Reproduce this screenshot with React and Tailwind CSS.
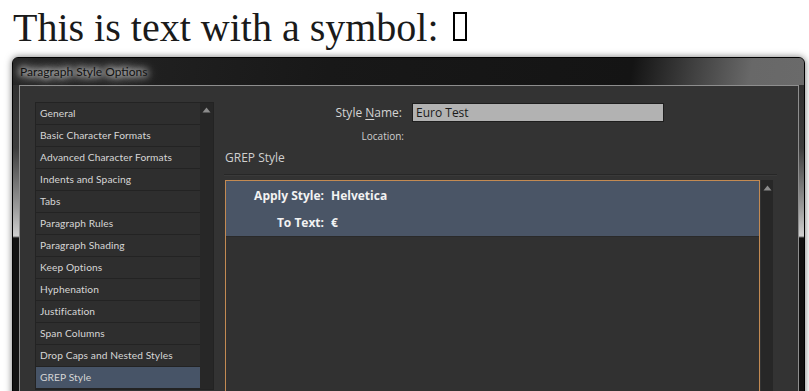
import React from 'react';

const sections = [
  'General',
  'Basic Character Formats',
  'Advanced Character Formats',
  'Indents and Spacing',
  'Tabs',
  'Paragraph Rules',
  'Paragraph Shading',
  'Keep Options',
  'Hyphenation',
  'Justification',
  'Span Columns',
  'Drop Caps and Nested Styles',
  'GREP Style',
];

const ScrollArrow = () => (
  <svg width="9" height="6" viewBox="0 0 9 6" className="mx-auto">
    <path d="M4.5 0.5 L8.5 5.5 L0.5 5.5 Z" fill="#8c8c8c" />
  </svg>
);

const App = () => {
  const selected = 'GREP Style';

  return (
    <div className="h-[391px] w-[809px] overflow-hidden bg-white">
      {/* sample text */}
      <div className="h-[57px] pl-[13px] pt-[8px] font-['Liberation_Serif',serif] text-[40px] leading-[40px] text-[#1a1a1a]">
        This is text with a symbol:
        <span className="ml-[14px] inline-block h-[29px] w-[14px] border-2 border-black align-baseline"></span>
      </div>

      {/* dialog window */}
      <div className="ml-[12px] mr-[4px] h-[400px] rounded-t-[6px] border border-black bg-[linear-gradient(to_bottom,#2a2a2a_0px,#3c3c3c_90px,#9c9c9c_150px,#cfcfcf_178px,#111_180px,#111_100%)] shadow-[0_0_7px_rgba(0,0,0,0.55)] font-['Open_Sans',sans-serif]">
        {/* title bar */}
        <div className="flex h-[27px] items-center rounded-t-[5px] bg-[linear-gradient(100deg,#262626_0%,#181818_40%,#141414_78%,#3c3c3c_85%,#686868_93%,#6a6a6a_100%)] pl-[7px] pt-[1px]">
          <span className="font-['Lato',sans-serif] text-[12px] text-[#111] [text-shadow:0_0_6px_#fff,0_0_10px_#fff,0_0_14px_#ddd]">
            Paragraph Style Options
          </span>
        </div>

        {/* client area */}
        <div className="ml-[6px] mr-[5px] h-[360px] border border-[#8e8e8e] bg-[#333333]">
          <div className="flex items-start pl-[15px] pt-[16px]">
            {/* section list */}
            <div className="flex border border-[#232323]">
              <div className="w-[164px] bg-[#2e2e2e]">
                {sections.map((s) => (
                  <div
                    key={s}
                    className={`flex h-[22px] items-center border-b border-[#232323] pl-[4px] font-['Lato',sans-serif] text-[10.2px] tracking-[0.1px] text-[#d6d6d6] ${
                      s === selected ? 'bg-[#475467]' : ''
                    }`}
                  >
                    {s}
                  </div>
                ))}
              </div>
              <div className="w-[13px] bg-[#272727] pt-[4px]">
                <ScrollArrow />
              </div>
            </div>

            {/* settings */}
            <div className="flex flex-1 flex-col pl-[11px] pt-[1px] pr-[21px]">
              <div className="flex h-[19px] items-center">
                <div className="w-[187px] pr-[10px] text-right text-[12px] text-[#d4d4d4]">
                  Style <span className="underline underline-offset-2">N</span>ame:
                </div>
                <div className="flex h-[19px] w-[252px] items-center border border-[#1e1e1e] bg-[#b2b2b2] pl-[3px] text-[12px] text-[#1a1a1a]">
                  Euro Test
                </div>
              </div>

              <div className="mt-[7px] flex h-[14px] items-center">
                <div className="w-[179px] text-right text-[10px] text-[#cfcfcf]">Location:</div>
              </div>

              <div className="mt-[7px] h-[16px] text-[12px] leading-[16px] text-[#d0d0d0]">GREP Style</div>

              <div className="mt-[8px] -ml-[1px] border-t border-[#272727] border-b border-b-[#3a3a3a]"></div>

              {/* GREP style panel */}
              <div className="mt-[4px] mr-[4px] flex">
                <div className="h-[240px] flex-1 border border-[#c38a52] bg-[#313131]">
                  <div className="border-b border-[#2a2a2a] bg-[#4a5566] pb-[5px] pt-[7px] text-[12px] font-bold text-[#f2f2f2]">
                    <div className="flex h-[16px] items-center">
                      <div className="w-[98px] text-right">Apply Style:</div>
                      <div className="pl-[7px]">Helvetica</div>
                    </div>
                    <div className="mt-[11px] flex h-[16px] items-center">
                      <div className="w-[98px] text-right">To Text:</div>
                      <div className="pl-[7px]">€</div>
                    </div>
                  </div>
                </div>
                <div className="ml-[1px] w-[12px] bg-[#272727] pt-[5px]">
                  <ScrollArrow />
                </div>
              </div>
            </div>
          </div>
        </div>
      </div>
    </div>
  );
};

export default App;
